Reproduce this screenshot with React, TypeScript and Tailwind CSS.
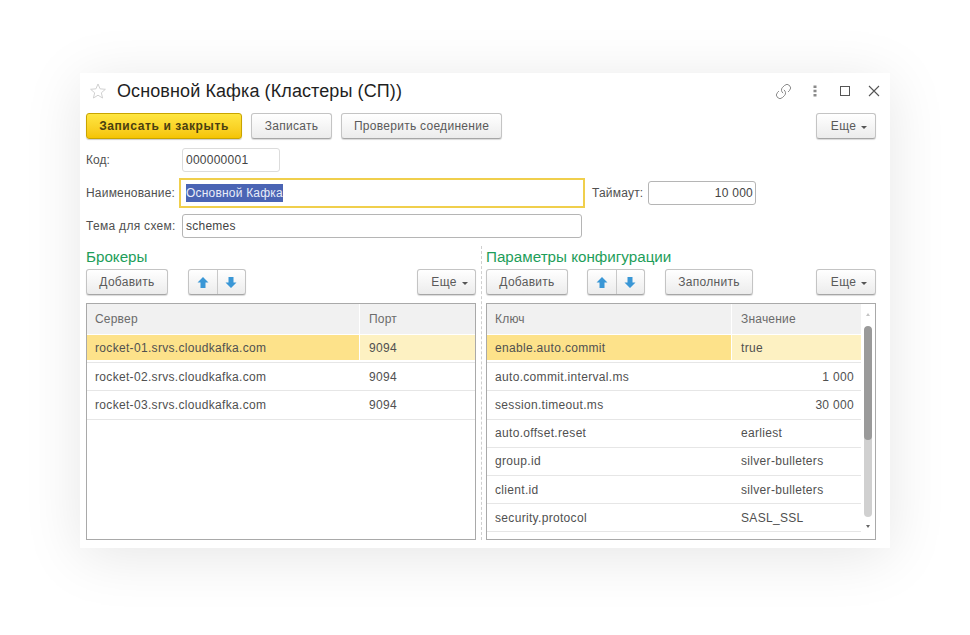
import React from "react";
import { Link } from "lucide-react";

const btn =
  "h-[26px] flex items-center justify-center rounded-[3px] border border-[#c4c4c4] border-b-[#a6a6a6] bg-gradient-to-b from-[#ffffff] to-[#ececec] text-[12px] text-[#5a5a5a] tracking-[0.28px] shadow-[0_1px_1px_rgba(0,0,0,0.15)]";

function More({ w = "w-[60px]" }: { w?: string }) {
  return (
    <div className={`${btn} ${w} gap-[5px] pl-[6px] tracking-[0.7px]`}>
      <span>Еще</span>
      <span className="mt-[2px] h-0 w-0 border-x-[3px] border-t-[3px] border-x-transparent border-t-[#555]" />
    </div>
  );
}

function Arrow({ down }: { down?: boolean }) {
  return (
    <svg width="12" height="13" viewBox="0 0 12 13" className={down ? "rotate-180" : ""}>
      <path d="M6 1 L11.5 6.5 H8.5 V12 H3.5 V6.5 H0.5 Z" fill="#3a97d6" />
    </svg>
  );
}

function Arrows() {
  return (
    <div className={`${btn} w-[58px]`}>
      <div className="flex h-full flex-1 items-center justify-center border-r border-[#c9c9c9]">
        <Arrow />
      </div>
      <div className="flex h-full flex-1 items-center justify-center">
        <Arrow down />
      </div>
    </div>
  );
}

function Row({
  a,
  b,
  selected,
  right,
}: {
  a: string;
  b: string;
  selected?: boolean;
  right?: boolean;
}) {
  return (
    <div className="flex h-[28.2px] border-b border-[#e6e6e6] tracking-[0.32px]">
      <div
        className={`flex min-w-0 flex-1 items-center pl-[8px] ${selected ? "mb-[2px] bg-[#fde28a] pt-[1px]" : ""}`}
      >
        {a}
      </div>
      <div
        className={`ml-[1px] flex shrink-0 items-center pl-[9px] ${selected ? "mb-[2px] bg-[#fdf1c2] pt-[1px]" : ""} ${right ? "justify-end pr-[7px]" : ""}`}
        style={{ width: "var(--col)" }}
      >
        {b}
      </div>
    </div>
  );
}

function Head({ a, b }: { a: string; b: string }) {
  return (
    <div className="mb-[1px] flex h-[30px] tracking-[0.2px] text-[#6b6b6b]">
      <div className="flex flex-1 items-center bg-[#f1f1f1] pl-[8px]">{a}</div>
      <div
        className="ml-[1px] flex shrink-0 items-center bg-[#f1f1f1] pl-[9px]"
        style={{ width: "var(--col)" }}
      >
        {b}
      </div>
    </div>
  );
}

const left = [
  ["rocket-01.srvs.cloudkafka.com", "9094"],
  ["rocket-02.srvs.cloudkafka.com", "9094"],
  ["rocket-03.srvs.cloudkafka.com", "9094"],
];

const right: [string, string, boolean][] = [
  ["enable.auto.commit", "true", false],
  ["auto.commit.interval.ms", "1 000", true],
  ["session.timeout.ms", "30 000", true],
  ["auto.offset.reset", "earliest", false],
  ["group.id", "silver-bulleters", false],
  ["client.id", "silver-bulleters", false],
  ["security.protocol", "SASL_SSL", false],
];

const input =
  "flex h-[24px] items-center rounded-[3px] border border-[#b5b5b5] bg-white px-[3px] text-[#444] tracking-[0.25px]";

export default function App() {
  return (
    <div className="h-[635px] w-[970px] overflow-hidden bg-white pl-[80px] pt-[73px] font-['Liberation_Sans',Arial,sans-serif] text-[12px] text-[#505050]">
      <div className="flex h-[475px] w-[810px] flex-col bg-white pl-[6px] pr-[14px] shadow-[0_8px_55px_rgba(0,0,0,0.10)]">
        {/* Title */}
        <div className="flex h-[36px] shrink-0 items-center">
          <svg width="18" height="18" viewBox="0 0 20 20" className="ml-[3px] mr-[10px]">
            <path
              d="M10 2.2 L12.3 7.6 L18.2 8.1 L13.7 12 L15.1 17.8 L10 14.7 L4.9 17.8 L6.3 12 L1.8 8.1 L7.7 7.6 Z"
              fill="none"
              stroke="#cfcfcf"
              strokeWidth="1.1"
            />
          </svg>
          <span className="text-[18px] leading-none tracking-[0.1px] text-[#1f1f1f]">
            Основной Кафка (Кластеры (СП))
          </span>
          <div className="ml-auto flex items-center">
            <Link size={17} strokeWidth={1.1} className="-scale-x-100 rotate-90 text-[#6a6a6a]" />
            <svg width="4" height="12" viewBox="0 0 4 12" className="ml-[21px]">
              <rect x="0.5" y="0.5" width="3" height="2.5" fill="#8a8a8a" />
              <rect x="0.5" y="4.75" width="3" height="2.5" fill="#8a8a8a" />
              <rect x="0.5" y="9" width="3" height="2.5" fill="#8a8a8a" />
            </svg>
            <div className="ml-[23px] h-[10px] w-[10px] border-[1.5px] border-[#555]" />
            <svg width="12" height="12" viewBox="0 0 12 12" className="ml-[18px] mr-[-4px]">
              <path d="M1 1 L11 11 M11 1 L1 11" stroke="#555" strokeWidth="1.1" />
            </svg>
          </div>
        </div>

        {/* Command bar */}
        <div className="mt-[4px] flex shrink-0 items-center">
          <div className="flex h-[26px] w-[156px] items-center justify-center rounded-[3px] border border-[#c9a400] bg-gradient-to-b from-[#ffe640] to-[#f5c400] text-[12px] font-bold tracking-[0.6px] text-[#4a3f10] shadow-[0_1px_1px_rgba(0,0,0,0.2)]">
            Записать и закрыть
          </div>
          <div className={`${btn} ml-[9px] w-[81px]`}>Записать</div>
          <div className={`${btn} ml-[9px] w-[161px]`}>Проверить соединение</div>
          <div className="ml-auto">
            <More />
          </div>
        </div>

        {/* Fields */}
        <div className="mt-[9px] flex h-[24px] shrink-0 items-center">
          <span className="w-[96px]">Код:</span>
          <div className={`${input} w-[98px] border-[#dcdcdc] tracking-[0.15px]`}>000000001</div>
        </div>
        <div className="mt-[6px] flex h-[30px] shrink-0 items-center">
          <span className="w-[93px] tracking-[0.2px]">Наименование:</span>
          <div className="flex h-[30px] w-[406px] items-center border-2 border-[#f0cf4c] bg-white px-[5px] text-[#444]">
            <span className="bg-[#4a64b4] tracking-[0.2px] text-[#e8ecf8]">Основной Кафка</span>
          </div>
          <span className="ml-[7px] w-[56px] tracking-[0.2px]">Таймаут:</span>
          <div className={`${input} w-[108px] justify-end pr-[2px] tracking-[0.2px]`}>10 000</div>
        </div>
        <div className="mt-[6px] flex h-[24px] shrink-0 items-center">
          <span className="w-[96px] tracking-[0.3px]">Тема для схем:</span>
          <div className={`${input} w-[400px] tracking-[0.5px]`}>schemes</div>
        </div>

        {/* Two panes */}
        <div className="mt-[8px] flex min-h-0 flex-1 pb-[8px]">
          <div className="flex w-[390px] shrink-0 flex-col">
            <div className="flex h-[23px] shrink-0 items-center text-[15.2px] text-[#1e9e5a]">Брокеры</div>
            <div className="flex shrink-0 items-center">
              <div className={`${btn} w-[82px]`}>Добавить</div>
              <div className="ml-[20px]">
                <Arrows />
              </div>
              <div className="ml-auto">
                <More w="w-[59px]" />
              </div>
            </div>
            <div
              className="mt-[8px] min-h-0 flex-1 border border-[#a9a9a9]"
              style={{ ["--col" as string]: "115px" }}
            >
              <Head a="Сервер" b="Порт" />
              {left.map(([a, b], i) => (
                <Row key={a} a={a} b={b} selected={i === 0} />
              ))}
            </div>
          </div>

          <div className="ml-[5px] mr-[4px] w-0 shrink-0 border-l border-dashed border-[#cfcfcf]" />

          <div className="flex w-[389px] shrink-0 flex-col">
            <div className="flex h-[23px] shrink-0 items-center text-[15.2px] text-[#1e9e5a]">
              Параметры конфигурации
            </div>
            <div className="flex shrink-0 items-center">
              <div className={`${btn} w-[82px]`}>Добавить</div>
              <div className="ml-[19px]">
                <Arrows />
              </div>
              <div className={`${btn} ml-[20px] w-[88px]`}>Заполнить</div>
              <div className="ml-auto mr-[-1px]">
                <More />
              </div>
            </div>
            <div
              className="relative mr-[-1px] mt-[8px] flex min-h-0 flex-1 border border-[#a9a9a9]"
              style={{ ["--col" as string]: "129px" }}
            >
              <div className="min-w-0 flex-1 overflow-hidden">
                <Head a="Ключ" b="Значение" />
                {right.map(([a, b, r], i) => (
                  <Row key={a} a={a} b={b} right={r} selected={i === 0} />
                ))}
              </div>
              <div className="flex w-[14px] shrink-0 flex-col items-center pt-[9px]">
                <span className="h-0 w-0 border-x-[2.5px] border-b-[3px] border-x-transparent border-b-[#c4c4c4]" />
                <div className="mt-[10px] h-[191px] w-[8px] overflow-hidden rounded-[4px] bg-[#d0d0d0]">
                  <div className="h-[114px] rounded-[4px] bg-[#9a9a9a]" />
                </div>
                <span className="mt-[8px] h-0 w-0 border-x-[2.5px] border-t-[3px] border-x-transparent border-t-[#666]" />
              </div>
            </div>
          </div>
        </div>
      </div>
    </div>
  );
}
